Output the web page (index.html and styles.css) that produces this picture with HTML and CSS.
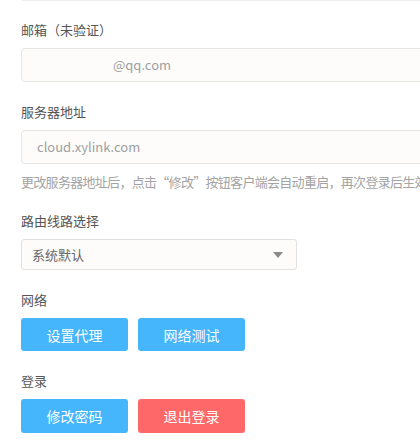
FILE: index.html
```html
<!DOCTYPE html>
<html lang="zh-CN">
<head>
<meta charset="utf-8">
<link rel="stylesheet" href="styles.css">
</head>
<body>
<div class="page">
  <div class="prev-edge"></div>
  <div class="field first">
    <div class="label">邮箱（未验证）</div>
    <div class="input email"><span class="masked">&nbsp;</span>@qq.com</div>
  </div>
  <div class="field">
    <div class="label">服务器地址</div>
    <div class="input server">cloud.xylink.com</div>
    <div class="hint">更改服务器地址后，点击“修改”按钮客户端会自动重启，再次登录后生效</div>
  </div>
  <div class="field">
    <div class="label">路由线路选择</div>
    <div class="select">
      <span>系统默认</span>
      <svg class="arrow" width="10" height="6" viewBox="0 0 10 6"><path d="M0 0 L10 0 L5 6 Z" fill="#8a8a8a"/></svg>
    </div>
  </div>
  <div class="field">
    <div class="label">网络</div>
    <div class="buttons">
      <button class="btn blue">设置代理</button>
      <button class="btn blue">网络测试</button>
    </div>
  </div>
  <div class="field">
    <div class="label">登录</div>
    <div class="buttons tall">
      <button class="btn blue">修改密码</button>
      <button class="btn red">退出登录</button>
    </div>
  </div>
</div>
</body>
</html>
```
FILE: styles.css
```css
html, body {
  margin: 0;
  padding: 0;
  background: #ffffff;
  overflow: hidden;
}
.page {
  width: 420px;
  height: 443px;
  overflow: hidden;
  padding-left: 21px;
  box-sizing: border-box;
  font-family: "Noto Sans CJK SC", "Noto Sans", sans-serif;
  font-size: 13px;
  color: #555555;
}
.prev-edge {
  height: 1px;
  margin-left: 1px;
  width: 460px;
  background: #f0f0f0;
}
.field {
  margin-top: 21px;
}
.field.first {
  margin-top: 20px;
}
.label {
  height: 18px;
  line-height: 18px;
  margin-bottom: 9px;
}
.input {
  width: 460px;
  height: 34px;
  box-sizing: border-box;
  border: 1px solid #e8e6e3;
  border-radius: 4px;
  background: #fdfcfa;
  color: #a0a0a0;
  font-size: 13px;
  line-height: 32px;
  padding-left: 15px;
  white-space: nowrap;
}
.input.email {
  padding-left: 0;
}
.masked {
  display: inline-block;
  width: 91px;
}
.hint {
  margin-top: 9px;
  height: 18px;
  line-height: 18px;
  color: #a3a3a3;
  white-space: nowrap;
  letter-spacing: -0.7px;
}
.select {
  width: 276px;
  height: 31px;
  box-sizing: border-box;
  border: 1px solid #e3e1de;
  border-radius: 3px;
  background: #fdfcfa;
  display: flex;
  align-items: center;
  justify-content: space-between;
  padding: 0 13px 0 10px;
  color: #666;
  margin-top: 1px;
}
.arrow {
  display: block;
}
.buttons {
  display: flex;
  gap: 10px;
  margin-top: 2px;
}
.btn {
  width: 107px;
  height: 33px;
  border: none;
  border-radius: 3px;
  color: #ffffff;
  font-family: "Noto Sans CJK SC", "Noto Sans", sans-serif;
  font-size: 14px;
  padding: 0;
  cursor: pointer;
}
.buttons.tall {
  margin-top: 1px;
}
.buttons.tall .btn {
  height: 34px;
}
.blue {
  background: #45b5fc;
}
.red {
  background: #fe6868;
}
```
